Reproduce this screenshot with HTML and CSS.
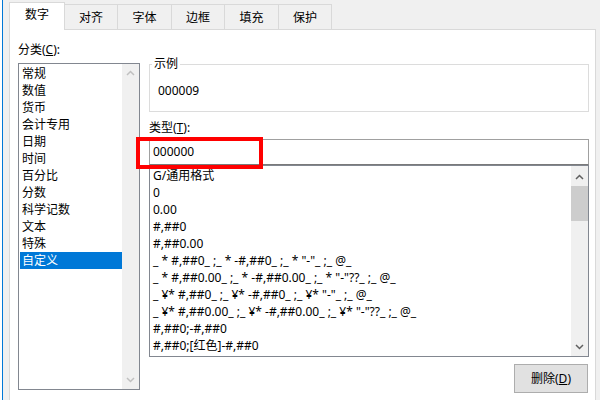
FILE: index.html
```html
<!DOCTYPE html>
<html lang="zh">
<head>
<meta charset="utf-8">
<title>设置单元格格式</title>
<link rel="stylesheet" href="styles.css">
</head>
<body>
<div class="screen">
  <div class="edge"></div>
  <div class="dialog">
    <div class="tabs">
      <div class="tab active">数字</div>
      <div class="tab">对齐</div>
      <div class="tab">字体</div>
      <div class="tab">边框</div>
      <div class="tab">填充</div>
      <div class="tab">保护</div>
    </div>
    <div class="panel">
      <div class="col-left">
        <div class="label">分类(<u>C</u>):</div>
        <div class="listbox cat">
          <ul class="items">
            <li>常规</li>
            <li>数值</li>
            <li>货币</li>
            <li>会计专用</li>
            <li>日期</li>
            <li>时间</li>
            <li>百分比</li>
            <li>分数</li>
            <li>科学记数</li>
            <li>文本</li>
            <li>特殊</li>
            <li class="selected">自定义</li>
          </ul>
          <div class="vscroll disabled">
            <svg class="arrow" width="9" height="6" viewBox="0 0 9 6"><polyline points="1,5 4.5,1.5 8,5" fill="none" stroke="currentColor" stroke-width="1.5"/></svg>
            <div class="track"></div>
            <svg class="arrow" width="9" height="6" viewBox="0 0 9 6"><polyline points="1,1 4.5,4.5 8,1" fill="none" stroke="currentColor" stroke-width="1.5"/></svg>
          </div>
        </div>
      </div>
      <div class="col-right">
        <fieldset class="sample">
          <legend>示例</legend>
          <div class="sample-val">000009</div>
        </fieldset>
        <div class="label type-label">类型(<u>T</u>):</div>
        <div class="type-input">
          <span>000000</span>
          <div class="mark"></div>
        </div>
        <div class="listbox fmt">
          <ul class="items">
            <li>G/通用格式</li>
            <li>0</li>
            <li>0.00</li>
            <li>#,##0</li>
            <li>#,##0.00</li>
            <li>_ * #,##0_ ;_ * -#,##0_ ;_ * "-"_ ;_ @_</li>
            <li>_ * #,##0.00_ ;_ * -#,##0.00_ ;_ * "-"??_ ;_ @_</li>
            <li>_ ¥* #,##0_ ;_ ¥* -#,##0_ ;_ ¥* "-"_ ;_ @_</li>
            <li>_ ¥* #,##0.00_ ;_ ¥* -#,##0.00_ ;_ ¥* "-"??_ ;_ @_</li>
            <li>#,##0;-#,##0</li>
            <li>#,##0;[红色]-#,##0</li>
          </ul>
          <div class="vscroll">
            <svg class="arrow" width="9" height="6" viewBox="0 0 9 6"><polyline points="1,5 4.5,1.5 8,5" fill="none" stroke="currentColor" stroke-width="1.5"/></svg>
            <div class="track"><div class="thumb"></div></div>
            <svg class="arrow" width="9" height="6" viewBox="0 0 9 6"><polyline points="1,1 4.5,4.5 8,1" fill="none" stroke="currentColor" stroke-width="1.5"/></svg>
          </div>
        </div>
        <div class="btn-row">
          <button class="btn">删除(<u>D</u>)</button>
        </div>
      </div>
    </div>
  </div>
</div>
</body>
</html>
```
FILE: styles.css
```css
* { box-sizing: border-box; }
html, body { margin: 0; padding: 0; }
body {
  background: #fff;
  font-family: "Noto Sans", "Noto Sans CJK SC", sans-serif;
  font-size: 12px;
  color: #000;
}
.screen {
  display: flex;
  width: 600px;
  height: 400px;
  overflow: hidden;
}
.edge {
  width: 3px;
  background: #fff;
  border-right: 1px solid #0078d7;
}
.dialog {
  flex: 1;
  display: flex;
  flex-direction: column;
  background: #f0f0f0;
  padding: 0 4px 0 6px;
}
.tabs {
  display: flex;
  align-items: flex-end;
  height: 29px;
  flex: none;
}
.tab {
  width: 54px;
  height: 25px;
  margin-left: -1px;
  border: 1px solid #d9d9d9;
  border-bottom: 0;
  background: #f0f0f0;
  display: flex;
  align-items: center;
  justify-content: center;
  line-height: 16px;
  padding-top: 1px;
}
.tab:nth-child(odd) { width: 55px; }
.tab.active {
  width: 56px;
  height: 28px;
  margin-left: 0;
  margin-bottom: -1px;
  background: #fff;
  position: relative;
  z-index: 2;
  padding-top: 0;
  padding-bottom: 3px;
}
.panel {
  flex: 1;
  display: flex;
  background: #fff;
  border: 1px solid #d9d9d9;
  border-bottom: 0;
  padding-left: 8px;
}
.label {
  line-height: 16px;
  height: 16px;
  white-space: nowrap;
}
.col-left {
  width: 122px;
  padding-top: 12px;
  display: flex;
  flex-direction: column;
}
.listbox {
  display: flex;
  border: 1px solid #828790;
  background: #fff;
  overflow: hidden;
}
.listbox.cat {
  margin-top: 5px;
  height: 327px;
}
.items {
  list-style: none;
  margin: 0;
  padding: 1px 0 0 1px;
  flex: 1;
  min-width: 0;
  overflow: hidden;
}
.items li {
  height: 17px;
  line-height: 17px;
  padding-left: 2px;
  white-space: pre;
}
.items li.selected {
  background: #0078d7;
  color: #fff;
}
.vscroll {
  width: 17px;
  flex: none;
  display: flex;
  flex-direction: column;
  align-items: center;
  background: #f0f0f0;
  color: #606060;
}
.vscroll.disabled { color: #c0c0c0; }
.vscroll .arrow {
  flex: none;
  margin: 6px 0;
}
.vscroll .track {
  flex: 1;
  align-self: stretch;
}
.thumb {
  height: 35px;
  background: #cdcdcd;
}
.col-right {
  width: 440px;
  margin-left: 9px;
  display: flex;
  flex-direction: column;
}
.sample {
  margin: 26px 0 0 0;
  padding: 11px 8px 6px 8px;
  border: 1px solid #dcdcdc;
  height: 56px;
}
.sample legend {
  padding: 0 2px;
  margin-left: -6px;
  line-height: 16px;
}
.sample-val {
  line-height: 16px;
}
.type-label {
  margin-top: 8px;
}
.type-input {
  position: relative;
  margin-top: 3px;
  height: 26px;
  border: 1px solid #a0a0a0;
  border-bottom-color: #7a7a7a;
  display: flex;
  align-items: center;
  padding-left: 3px;
  padding-bottom: 2px;
}
.type-input .mark {
  position: absolute;
  left: -14px;
  top: -3px;
  width: 127px;
  height: 32px;
  border: 4px solid #ff0000;
}
.listbox.fmt {
  height: 192px;
}
.listbox.fmt .items {
  padding: 1px 0 0 1px;
}
.listbox.fmt .items li { padding-left: 2px; }
.listbox.fmt .vscroll .arrow:first-child { margin-top: 8px; margin-bottom: 4px; }
.listbox.fmt .vscroll .track { padding-top: 2px; }
.btn-row {
  display: flex;
  justify-content: flex-end;
  margin-top: 7px;
  padding-right: 1px;
}
.btn {
  width: 74px;
  height: 29px;
  background: #e1e1e1;
  border: 1px solid #adadad;
  font: inherit;
  color: #000;
  padding: 0;
  line-height: 16px;
}
```
